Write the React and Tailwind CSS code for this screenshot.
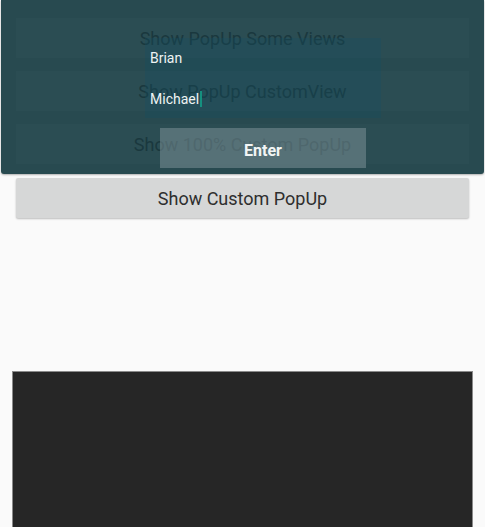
export default function App() {
  const font = { fontFamily: "Roboto, 'Noto Sans', sans-serif" };
  const labels = ["Show PopUp Some Views", "Show PopUp CustomView", "Show 100% Custom PopUp"];
  return (
    <div className="relative w-[485px] h-[527px] overflow-hidden bg-[#fafafa]" style={font}>
      <div className="flex flex-col gap-[13px] px-[16px] pt-[18px]">
        {labels.map((l) => (
          <div key={l} className="h-[40px] rounded-[2px] bg-[#d6d7d7] shadow-[0_1px_2px_rgba(0,0,0,0.25)] flex items-center justify-center text-[18px] text-[#2e2e2e]">
            {l}
          </div>
        ))}
        <div className="h-[40px] mt-[1px] rounded-[2px] bg-[#d6d7d7] shadow-[0_1px_2px_rgba(0,0,0,0.25)] flex items-center justify-center text-[18px] text-[#2e2e2e]">
          Show Custom PopUp
        </div>
      </div>
      <div className="mx-[12px] mt-[153px] h-[160px] bg-[#262626] border border-[#8a8a8a] border-b-0"></div>

      <div className="absolute left-[1px] top-0 w-[483px] h-[174px] bg-[#284a50] rounded-b-[3px] shadow-[0_1px_2px_rgba(0,0,0,0.3)]">
        <div className="flex flex-col gap-[13px] px-[15px] pt-[18px]">
          {labels.map((l) => (
            <div key={l} className="h-[40px] bg-[#2b4d53] flex items-center justify-center text-[18px] text-[#1a383e]">
              {l}
            </div>
          ))}
        </div>
        <div className="absolute left-[144px] top-[38px] w-[236px] flex flex-col">
          <div className="h-[80px] bg-[rgba(20,80,100,0.3)] flex flex-col pl-[5px] pt-[11px] text-[14px] text-[#eef3f3] leading-[18px]">
            <div>Brian</div>
            <div className="flex items-center mt-[23px]">
              Michael<span className="inline-block w-[2px] h-[16px] bg-[#15907f] ml-[1px]"></span>
            </div>
          </div>
          <div className="ml-[15px] mt-[10px] w-[206px] h-[40px] bg-[rgba(130,150,155,0.5)] flex items-center justify-center pt-[5px] text-[16px] font-bold text-[#f2f5f5]">
            Enter
          </div>
        </div>
      </div>
    </div>
  );
}
